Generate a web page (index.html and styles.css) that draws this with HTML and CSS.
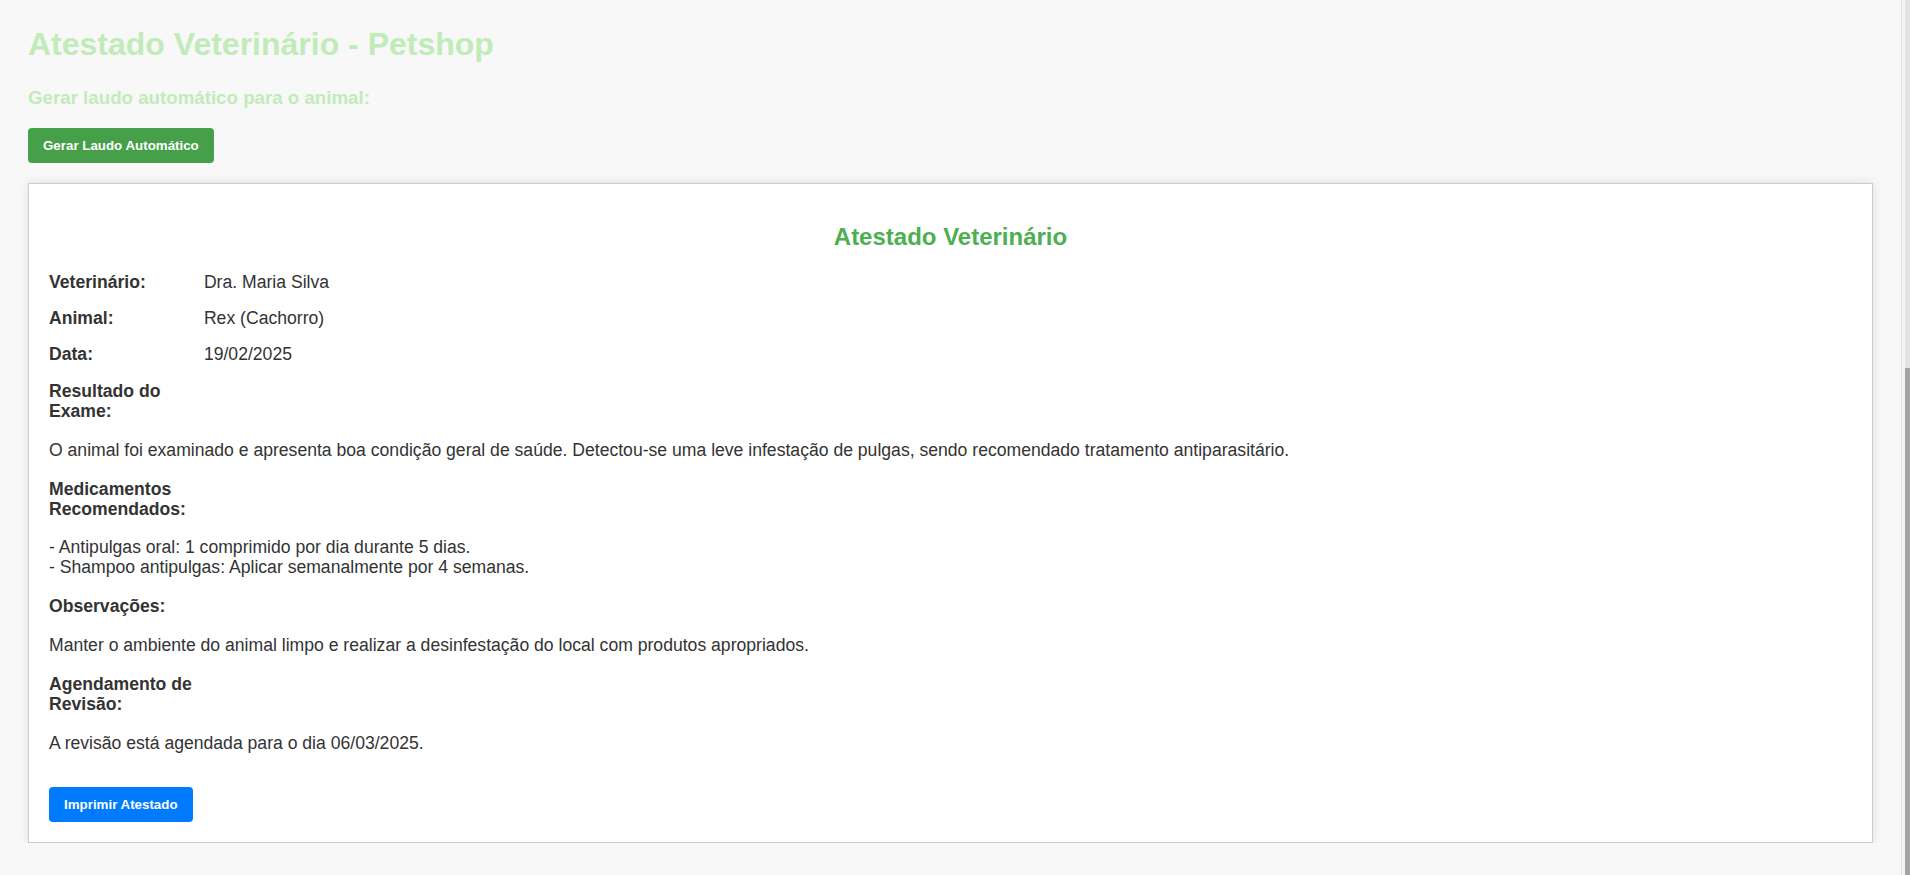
FILE: index.html
```html
<!DOCTYPE html>
<html lang="pt-BR">
<head>
<meta charset="utf-8">
<title>Atestado Veterinário - Petshop</title>
<link rel="stylesheet" href="styles.css">
</head>
<body>
<div class="page">
  <h1 class="title">Atestado Veterinário - Petshop</h1>
  <h3 class="subtitle">Gerar laudo automático para o animal:</h3>
  <div class="top-actions">
    <button class="btn btn-green">Gerar Laudo Automático</button>
  </div>
  <div class="card">
    <h2 class="card-title">Atestado Veterinário</h2>
    <div class="info">
      <div class="row"><span class="label">Veterinário:</span> <span class="value">Dra. Maria Silva</span></div>
      <div class="row"><span class="label">Animal:</span> <span class="value">Rex (Cachorro)</span></div>
      <div class="row"><span class="label">Data:</span> <span class="value">19/02/2025</span></div>
    </div>
    <div class="section">
      <div class="section-head"><span class="label">Resultado do Exame:</span></div>
      <p class="section-text">O animal foi examinado e apresenta boa condição geral de saúde. Detectou-se uma leve infestação de pulgas, sendo recomendado tratamento antiparasitário.</p>
    </div>
    <div class="section">
      <div class="section-head"><span class="label">Medicamentos Recomendados:</span></div>
      <p class="section-text">- Antipulgas oral: 1 comprimido por dia durante 5 dias.<br>- Shampoo antipulgas: Aplicar semanalmente por 4 semanas.</p>
    </div>
    <div class="section">
      <div class="section-head"><span class="label">Observações:</span></div>
      <p class="section-text">Manter o ambiente do animal limpo e realizar a desinfestação do local com produtos apropriados.</p>
    </div>
    <div class="section">
      <div class="section-head"><span class="label">Agendamento de Revisão:</span></div>
      <p class="section-text">A revisão está agendada para o dia 06/03/2025.</p>
    </div>
    <div class="actions">
      <button class="btn btn-blue">Imprimir Atestado</button>
    </div>
  </div>
</div>
<div class="scrollbar"><div class="track"></div><div class="thumb"></div></div>
</body>
</html>
```
FILE: styles.css
```css
html, body {
  margin: 0;
  padding: 0;
}

body {
  background: #f8f8f8;
  font-family: "Liberation Sans", Arial, sans-serif;
  color: #333;
  overflow: hidden;
}

.page {
  padding: 26px 37px 0 28px;
}

.title {
  font-size: 32px;
  font-weight: bold;
  line-height: 37px;
  margin: 0 0 24px;
  color: #c1ecb9;
}

.subtitle {
  font-size: 18.72px;
  font-weight: bold;
  line-height: 21px;
  margin: 0 0 19.5px;
  color: #c1ecb9;
}

.top-actions {
  display: flex;
  margin-bottom: 20px;
}

.btn {
  font-family: "Liberation Sans", Arial, sans-serif;
  font-size: 13.33px;
  font-weight: bold;
  line-height: 15px;
  padding: 10px 15px;
  border: 0;
  border-radius: 4px;
  color: #fff;
  cursor: pointer;
}

.btn-green {
  background: #45a049;
}

.btn-blue {
  background: #007bff;
}

.card {
  background: #fff;
  border: 1px solid #cccccc;
  padding: 20px;
  box-shadow: 0 0 10px rgba(0, 0, 0, 0.1);
  font-size: 17.6px;
  line-height: 20px;
}

.card-title {
  text-align: center;
  color: #4caf50;
  font-size: 24px;
  line-height: 28px;
  font-weight: bold;
  margin: 19.5px 0 21px;
}

.row {
  margin-bottom: 16px;
}

.label {
  display: inline-block;
  vertical-align: top;
  width: 150px;
  font-weight: bold;
  color: #333;
}

.section {
  margin-top: 17px;
}

.section + .section {
  margin-top: 18.8px;
}

.section-text {
  margin: 18.8px 0 0;
}

.actions {
  display: flex;
  padding-top: 34px;
}

.scrollbar {
  position: fixed;
  top: 0;
  right: 0;
  bottom: 0;
  width: 8px;
  background: #f4f4f4;
  border-left: 1px solid #e0e0e0;
}

.track {
  position: absolute;
  top: 0;
  right: 0;
  bottom: 0;
  width: 5px;
  background: #e2e2e2;
}

.thumb {
  position: absolute;
  top: 368px;
  right: 0;
  bottom: 0;
  width: 5px;
  background: #a3a3a3;
}
```
